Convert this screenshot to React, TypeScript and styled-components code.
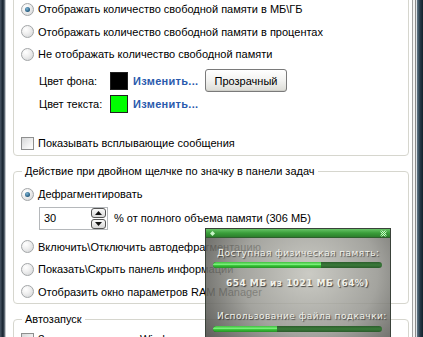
import React from "react";
import styled, { createGlobalStyle } from "styled-components";

const Global = createGlobalStyle`
  html, body { margin: 0; padding: 0; background: #fff; }
  body {
    font-family: "Liberation Sans", Arial, sans-serif;
    font-size: 11px;
    color: #000;
  }
`;

const Screen = styled.div`
  position: relative;
  width: 423px;
  height: 337px;
  overflow: hidden;
  display: flex;
  background: #fff;
`;

const LeftFrame = styled.div`
  flex: none;
  width: 5px;
  background: linear-gradient(to right, #4a5866, #1e2a36 50%, #33404c 80%, #8f979e);
  border-right: 1px solid #c4c8cc;
`;

const RightFrame = styled.div`
  flex: none;
  width: 11px;
  background: linear-gradient(
    to right,
    #a2a2a2 0 1px,
    #f4f4f4 1px 3px,
    #8c8c8c 3px 4px,
    #dfe3e6 4px 5px,
    #62788a 5px,
    #2a3e4c 70%,
    #12222c 100%
  );
`;

const Main = styled.div`
  flex: 1;
  min-width: 0;
  display: flex;
  flex-direction: column;
  padding: 0 3px 0 7px;
`;

const Group = styled.fieldset<{ $first?: boolean; $top?: number }>`
  margin: ${(p) => (p.$first ? "-10px" : `${p.$top ?? 0}px`)} 0 0 0;
  padding: 0;
  min-width: 0;
  border: 1px solid #d6d6ce;
  border-radius: 4px;
`;

const Legend = styled.legend`
  margin-left: 8px;
  padding: 0 3px;
  line-height: 14px;
  font-size: 11px;
  color: #000;
`;

const Content = styled.div<{ $pt: number; $pb: number }>`
  display: flex;
  flex-direction: column;
  padding: ${(p) => p.$pt}px 0 ${(p) => p.$pb}px 7px;
`;

const OptionRow = styled.div<{ $h?: number; $mt?: number }>`
  display: flex;
  align-items: center;
  height: ${(p) => p.$h ?? 22.5}px;
  margin-top: ${(p) => p.$mt ?? 0}px;
  white-space: nowrap;
  gap: 3px;
`;

const RadioDot = styled.span<{ $on?: boolean }>`
  flex: none;
  position: relative;
  width: 11px;
  height: 11px;
  border-radius: 50%;
  border: 1px solid #a3a6a8;
  background: radial-gradient(circle at 35% 30%, #ffffff 0%, #f0f0f0 40%, #cfd1d3 100%);
  margin-right: 1px;
  &::after {
    content: "";
    display: ${(p) => (p.$on ? "block" : "none")};
    position: absolute;
    left: 3px;
    top: 3px;
    width: 5px;
    height: 5px;
    border-radius: 50%;
    background: radial-gradient(circle at 40% 35%, #7fb6d6, #21587c 70%, #173e58);
  }
`;

const CheckBox = styled.span`
  flex: none;
  width: 11px;
  height: 11px;
  border: 1px solid #8e8f8f;
  background: linear-gradient(135deg, #d6d7d8, #f6f6f6 70%, #ffffff);
  margin-right: 1px;
`;

const ColorRow = styled.div<{ $h: number; $mt?: number }>`
  display: flex;
  align-items: center;
  height: ${(p) => p.$h}px;
  margin-top: ${(p) => p.$mt ?? 0}px;
  padding-left: 18px;
  white-space: nowrap;
`;

const ColorLabel = styled.span`
  width: 71px;
  flex: none;
`;

const Swatch = styled.span<{ $color: string }>`
  flex: none;
  width: 16px;
  height: 16px;
  border: 1px solid #202020;
  background: ${(p) => p.$color};
  margin-right: 5px;
`;

const ChangeLink = styled.span`
  width: 72px;
  flex: none;
  font-weight: bold;
  color: #2a5aad;
  letter-spacing: 0.3px;
`;

const XpButton = styled.button`
  width: 82px;
  height: 23px;
  padding: 0;
  font-family: inherit;
  font-size: 11px;
  color: #000;
  border: 1px solid #7a7a7a;
  border-radius: 3px;
  background: linear-gradient(#ffffff, #f2f2f0 50%, #dcdcd6);
  box-shadow: inset 0 -1px 0 #cfcfc9;
`;

const SpinRow = styled.div`
  display: flex;
  align-items: center;
  height: 23px;
  margin-top: 1px;
  padding-left: 19px;
  white-space: nowrap;
`;

const SpinBox = styled.div`
  display: flex;
  align-items: center;
  justify-content: space-between;
  width: 62px;
  height: 21px;
  border: 1px solid #b5b8bb;
  background: #fff;
  padding: 0 1px 0 4px;
  box-sizing: content-box;
  margin-right: 6px;
  margin-left: -1px;
`;

const SpinButtons = styled.div`
  display: flex;
  flex-direction: column;
  gap: 1px;
  width: 15px;
`;

const SpinBtn = styled.div`
  height: 8px;
  border: 1px solid #555;
  border-radius: 3px;
  background: linear-gradient(#fafafa, #d8d8d8);
  display: flex;
  align-items: center;
  justify-content: center;
`;

const Popup = styled.div`
  position: absolute;
  left: 205px;
  top: 228px;
  width: 184px;
  height: 118px;
  border: 1px solid #3a423a;
  background:
    radial-gradient(ellipse 68% 95% at 56% 38%, rgba(190, 190, 182, 0.8), rgba(146, 146, 140, 0.84) 55%, rgba(80, 80, 76, 0.92) 100%);
  display: flex;
  flex-direction: column;
`;

const PopupTitle = styled.div`
  height: 8px;
  background: linear-gradient(#66c466, #3a9e3a 50%, #2c7e2c);
  border-bottom: 1px solid #2d5e2d;
  display: flex;
  align-items: center;
  justify-content: space-between;
  padding: 0 3px 0 4px;
`;

const PopupBody = styled.div`
  display: flex;
  flex-direction: column;
  padding: 8px 8px 0 7px;
  font-family: "DejaVu Sans", Verdana, sans-serif;
  font-size: 9px;
  color: #f2f2ea;
  text-shadow: 1px 1px 1px rgba(30, 30, 30, 0.75);
`;

const PopupText = styled.div<{ $mt?: number; $bold?: boolean; $center?: boolean }>`
  line-height: 14px;
  margin-top: ${(p) => p.$mt ?? 0}px;
  font-weight: ${(p) => (p.$bold ? "bold" : "normal")};
  text-align: ${(p) => (p.$center ? "center" : "left")};
  padding-left: ${(p) => (p.$center ? 0 : 4)}px;
  white-space: nowrap;
  letter-spacing: 0.45px;
`;

const Bar = styled.div<{ $mt: number }>`
  height: 6px;
  margin-top: ${(p) => p.$mt}px;
  border-radius: 3px;
  background: linear-gradient(#2c5e2c, #3a7a3a 50%, #2a5a2a);
  overflow: hidden;
`;

const BarFill = styled.div`
  height: 100%;
  border-radius: 3px 0 0 3px;
  background: linear-gradient(#3fbf3f, #7cf27c 45%, #34c234 60%, #279027);
`;

const Radio = ({ on, children }: { on?: boolean; children: React.ReactNode }) => (
  <>
    <RadioDot $on={on} />
    <span>{children}</span>
  </>
);

const Arrow = ({ up }: { up?: boolean }) => (
  <svg width="7" height="4" viewBox="0 0 7 4">
    <path d={up ? "M0 4 L3.5 0 L7 4 Z" : "M0 0 L3.5 4 L7 0 Z"} fill="#111" />
  </svg>
);

export default function App() {
  return (
    <>
      <Global />
      <Screen>
        <LeftFrame />
        <Main>
          <Group $first>
            <Content $pt={7} $pb={1}>
              <OptionRow>
                <Radio on>Отображать количество свободной памяти в МБ\ГБ</Radio>
              </OptionRow>
              <OptionRow>
                <Radio>Отображать количество свободной памяти в процентах</Radio>
              </OptionRow>
              <OptionRow>
                <Radio>Не отображать количество свободной памяти</Radio>
              </OptionRow>
              <ColorRow $h={24} $mt={3}>
                <ColorLabel>Цвет фона:</ColorLabel>
                <Swatch $color="#000000" />
                <ChangeLink>Изменить...</ChangeLink>
                <XpButton>Прозрачный</XpButton>
              </ColorRow>
              <ColorRow $h={23}>
                <ColorLabel>Цвет текста:</ColorLabel>
                <Swatch $color="#00ff00" />
                <ChangeLink>Изменить...</ChangeLink>
              </ColorRow>
              <OptionRow $h={22} $mt={16.5}>
                <CheckBox />
                <span>Показывать всплывающие сообщения</span>
              </OptionRow>
            </Content>
          </Group>

          <Group $top={8}>
            <Legend>Действие при двойном щелчке по значку в панели задач</Legend>
            <Content $pt={5} $pb={0}>
              <OptionRow>
                <Radio on>Дефрагментировать</Radio>
              </OptionRow>
              <SpinRow>
                <SpinBox>
                  <span>30</span>
                  <SpinButtons>
                    <SpinBtn>
                      <Arrow up />
                    </SpinBtn>
                    <SpinBtn>
                      <Arrow />
                    </SpinBtn>
                  </SpinButtons>
                </SpinBox>
                <span>% от полного объема памяти (306 МБ)</span>
              </SpinRow>
              <OptionRow $mt={6}>
                <Radio>Включить\Отключить автодефрагментацию</Radio>
              </OptionRow>
              <OptionRow>
                <Radio>Показать\Скрыть панель информации</Radio>
              </OptionRow>
              <OptionRow>
                <Radio>Отобразить окно параметров RAM Manager</Radio>
              </OptionRow>
            </Content>
          </Group>

          <Group $top={8}>
            <Legend>Автозапуск</Legend>
            <Content $pt={3} $pb={4}>
              <OptionRow $h={20}>
                <CheckBox />
                <span>Запускать вместе с Windows</span>
              </OptionRow>
            </Content>
          </Group>
        </Main>
        <RightFrame />

        <Popup>
          <PopupTitle>
            <svg width="5" height="5" viewBox="0 0 5 5">
              <path d="M2.5 0 L5 2.5 L2.5 5 L0 2.5 Z" fill="#c8f5c8" />
            </svg>
            <svg width="7" height="7" viewBox="0 0 7 7">
              <path d="M1 1 L6 6 M6 1 L1 6" stroke="#d6ffd6" strokeWidth="2.2" />
              <path d="M1 1 L6 6 M6 1 L1 6" stroke="#37b037" strokeWidth="1" />
            </svg>
          </PopupTitle>
          <PopupBody>
            <PopupText>Доступная физическая память:</PopupText>
            <Bar $mt={2}>
              <BarFill style={{ width: "64%" }} />
            </Bar>
            <PopupText $mt={8} $bold $center>
              654 МБ из 1021 МБ (64%)
            </PopupText>
            <PopupText $mt={19}>Использование файла подкачки:</PopupText>
            <Bar $mt={3}>
              <BarFill style={{ width: "38%" }} />
            </Bar>
          </PopupBody>
        </Popup>
      </Screen>
    </>
  );
}
